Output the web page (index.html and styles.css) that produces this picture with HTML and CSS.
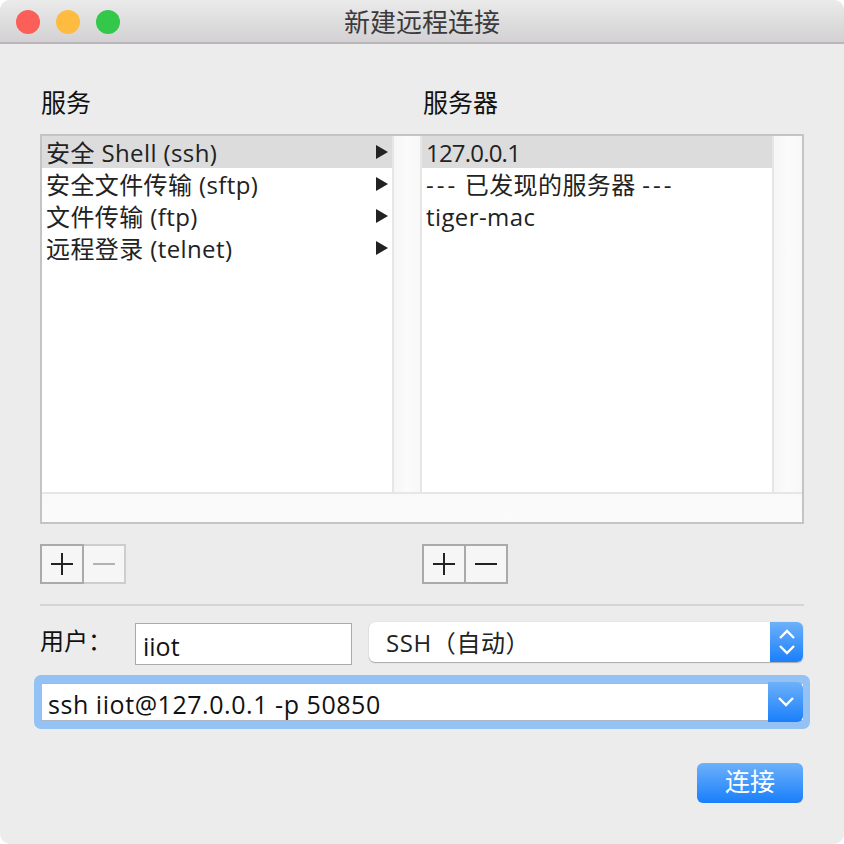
FILE: index.html
```html
<!DOCTYPE html>
<html lang="zh-CN">
<head>
    <meta charset="UTF-8">
    <meta name="viewport" content="width=device-width, initial-scale=1.0">
    <title>新建远程连接</title>
    <link rel="stylesheet" href="styles.css">
</head>
<body>

    <div class="window">
        <div class="titlebar">
            <div class="lights">
                <span class="light red"></span>
                <span class="light yellow"></span>
                <span class="light green"></span>
            </div>
            <div class="title">新建远程连接</div>
        </div>

        <div class="content">
            <div class="labels">
                <div class="label">服务</div>
                <div class="label">服务器</div>
            </div>

            <div class="lists">
                <div class="panes">
                    <div class="pane">
                        <div class="row selected"><span>安全 Shell (ssh)</span><i class="arrow"></i></div>
                        <div class="row"><span>安全文件传输 (sftp)</span><i class="arrow"></i></div>
                        <div class="row"><span>文件传输 (ftp)</span><i class="arrow"></i></div>
                        <div class="row"><span>远程登录 (telnet)</span><i class="arrow"></i></div>
                    </div>
                    <div class="scroll"></div>
                    <div class="pane right">
                        <div class="row selected"><span class="digits">127.0.0.1</span></div>
                        <div class="row"><span class="dashes">---</span> 已发现的服务器 <span class="dashes">---</span></div>
                        <div class="row"><span>tiger-mac</span></div>
                    </div>
                    <div class="scroll last"></div>
                </div>
                <div class="statusbar"></div>
            </div>

            <div class="tools">
                <div class="btn-group">
                    <button class="tool">
                        <svg width="22" height="22" viewBox="0 0 22 22"><path d="M0 11H22M11 0V22" stroke="#222" stroke-width="2"/></svg>
                    </button>
                    <button class="tool disabled">
                        <svg width="22" height="22" viewBox="0 0 22 22"><path d="M0 11H22" stroke="#b2b2b2" stroke-width="2"/></svg>
                    </button>
                </div>
                <div class="btn-group">
                    <button class="tool">
                        <svg width="22" height="22" viewBox="0 0 22 22"><path d="M0 11H22M11 0V22" stroke="#222" stroke-width="2"/></svg>
                    </button>
                    <button class="tool">
                        <svg width="22" height="22" viewBox="0 0 22 22"><path d="M0 11H22" stroke="#222" stroke-width="2"/></svg>
                    </button>
                </div>
            </div>

            <div class="separator"></div>

            <div class="user-row">
                <label class="user-label">用户：</label>
                <div class="user-input">iiot</div>
                <div class="popup">
                    <span class="popup-text">SSH（自动）</span>
                    <span class="blue popup-btn">
                        <svg width="18" height="30" viewBox="0 0 18 30"><path d="M2 11L9 4L16 11M2 19L9 26L16 19" fill="none" stroke="#fff" stroke-width="2.4"/></svg>
                    </span>
                </div>
            </div>

            <div class="combo-ring">
                <div class="combo">
                    <span class="combo-text">ssh iiot@127.0.0.1 -p 50850</span>
                    <span class="blue combo-btn">
                        <svg width="18" height="12" viewBox="0 0 18 12"><path d="M2 2L9 9L16 2" fill="none" stroke="#fff" stroke-width="2.4"/></svg>
                    </span>
                </div>
            </div>

            <div class="actions">
                <button class="blue connect">连接</button>
            </div>
        </div>
    </div>

</body>
</html>
```

FILE: styles.css
```css
/* General Styling */
html, body {
    margin: 0;
    height: 100%;
    background: #fff;
}

body {
    font-family: "Open Sans", "Noto Sans CJK SC", sans-serif;
    color: #222;
    overflow: hidden;
}

.window {
    height: 844px;
    background: #ececec;
    border-radius: 10px;
    overflow: hidden;
}

/* Title bar */
.titlebar {
    height: 42px;
    border-bottom: 2px solid #b8b6b8;
    background: linear-gradient(#ebebeb, #d3d1d3);
    display: flex;
    align-items: center;
    justify-content: center;
    position: relative;
}

.lights {
    position: absolute;
    left: 16px;
    top: 10px;
    display: flex;
    gap: 16px;
}

.light {
    width: 24px;
    height: 24px;
    border-radius: 50%;
}

.red { background: #fc5f57; }
.yellow { background: #fdbc40; }
.green { background: #34c84a; }

.title {
    font-size: 26px;
    color: #3c3a3c;
}

/* Main area */
.content {
    padding: 44px 40px 0;
}

.labels {
    display: grid;
    grid-template-columns: 382px 1fr;
    height: 30px;
    line-height: 28px;
    margin-bottom: 16px;
}

.label {
    font-size: 25px;
    color: #111;
    padding-left: 1px;
}

.lists {
    height: 386px;
    border: 2px solid #c4c4c4;
    background: #fff;
    display: flex;
    flex-direction: column;
}

.panes {
    flex: 1;
    display: flex;
    min-height: 0;
}

.pane {
    width: 350px;
}

.scroll {
    width: 26px;
    border-left: 2px solid #e6e6e6;
    border-right: 2px solid #e6e6e6;
    background: linear-gradient(to right, #f6f6f6, #fbfbfb 50%, #f8f8f8);
}

.scroll.last {
    width: 28px;
    border-right: none;
}

.row {
    height: 32px;
    line-height: 34px;
    padding-left: 4px;
    font-size: 24px;
    letter-spacing: 0.4px;
    position: relative;
    white-space: nowrap;
}

.digits {
    letter-spacing: -0.8px;
}

.dashes {
    letter-spacing: 3px;
}

.selected {
    background: #dcdcdc;
}

.arrow {
    position: absolute;
    right: 4px;
    top: 9px;
    border-left: 12px solid #222;
    border-top: 7px solid transparent;
    border-bottom: 7px solid transparent;
}

.statusbar {
    height: 28px;
    border-top: 2px solid #e6e6e6;
    background: linear-gradient(#f9f9f9, #fbfbfb);
}

/* Add and remove buttons */
.tools {
    display: grid;
    grid-template-columns: 382px 1fr;
    margin-top: 20px;
}

.btn-group {
    display: flex;
    width: 86px;
    height: 40px;
}

.tool {
    flex: 1;
    padding: 0;
    background: #f6f6f6;
    border: 2px solid #aaa;
    display: flex;
    align-items: center;
    justify-content: center;
}

.tool + .tool {
    border-left: none;
}

.tool.disabled {
    border-color: #cdcdcd;
}

.separator {
    height: 2px;
    background: #d4d4d4;
    margin-top: 20px;
}

/* User row */
.user-row {
    display: flex;
    align-items: flex-start;
    margin-top: 16px;
}

.user-label {
    width: 95px;
    font-size: 24px;
    line-height: 38px;
    color: #111;
}

.user-input {
    width: 208px;
    height: 40px;
    margin-top: 1px;
    padding-left: 7px;
    border: 1px solid #aaa;
    background: #fff;
    font-size: 25px;
    line-height: 44px;
    color: #111;
}

.popup {
    flex: 1;
    margin: 0 1px 0 17px;
    height: 40px;
    background: #fff;
    border-radius: 6px;
    box-shadow: 0 1px 1px #aaa, 0 0 1px #bbb;
    display: flex;
    justify-content: space-between;
    overflow: hidden;
}

.popup-text {
    padding-left: 17px;
    font-size: 24px;
    letter-spacing: 0.6px;
    line-height: 42px;
}

.blue {
    background: linear-gradient(#6db1fa, #197ffb);
    color: #fff;
}

.popup-btn {
    width: 33px;
    display: flex;
    align-items: center;
    justify-content: center;
}

/* Focused combo box */
.combo-ring {
    margin: 10px -6px 0 -6px;
    padding: 8px 7px 8px 8px;
    background: #94c2f5;
    border-radius: 7px;
}

.combo {
    height: 36px;
    background: #fff;
    display: flex;
    justify-content: space-between;
    border-top: 1px solid #a8b8c8;
    border-bottom: 1px solid #a8b8c8;
}

.combo-text {
    padding-left: 6px;
    font-size: 25px;
    letter-spacing: 0.55px;
    line-height: 40px;
    color: #111;
}

.combo-btn {
    width: 35px;
    margin: -2px 0;
    border-radius: 0 6px 6px 0;
    display: flex;
    align-items: center;
    justify-content: center;
}

.actions {
    display: flex;
    justify-content: flex-end;
    margin-top: 34px;
    padding-right: 1px;
}

.connect {
    width: 106px;
    height: 40px;
    border: none;
    border-radius: 6px;
    font-family: inherit;
    font-size: 25px;
    line-height: 36px;
    padding: 0 0 4px;
}
```
